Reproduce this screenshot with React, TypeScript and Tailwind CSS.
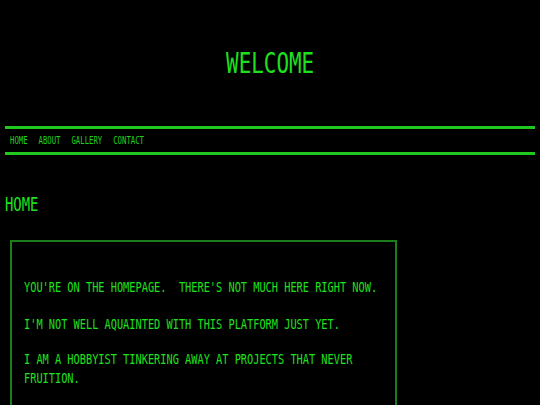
import React from 'react';

// the original uses a narrow pixel font; squeeze a mono face to the same proportions
const mono = { fontFamily: '"DejaVu Sans Mono", "Liberation Mono", monospace' };

const NAV = ['Home', 'About', 'Gallery', 'Contact'];

export default function App() {
  return (
    <div className="min-h-[405px] w-[540px] overflow-hidden bg-black uppercase text-[#1fe01f]" style={mono}>
      {/* title */}
      <header className="h-[126px] flex items-center justify-center">
        <h1 className="text-[29px] leading-none scale-x-[0.72]">Welcome</h1>
      </header>

      {/* nav bar */}
      <nav className="mx-[5px] h-[29px] border-y-[3px] border-[#20c820] flex items-center pl-[5px]">
        <div className="flex gap-[15px] origin-left scale-x-[0.73] whitespace-nowrap">
          {NAV.map((item) => (
            <a key={item} className="text-[10px] leading-none text-[#1fd01f]">
              {item}
            </a>
          ))}
        </div>
      </nav>

      {/* page content */}
      <main className="pt-[37px]">
        <h2 className="ml-[5px] text-[19px] leading-[24px] origin-left scale-x-[0.73]">Home</h2>
        <div className="ml-[10px] mt-[24px] w-[387px] border-2 border-[#1b7d1b] pl-[12px] pt-[36px] pb-6">
          <div className="w-[500px] origin-left scale-x-[0.735] text-[14px] leading-[19px] whitespace-pre-wrap">
            <p className="mb-[18px]">You're on the homepage.  There's not much here right now.</p>
            <p className="mb-[16px]">I'm not well aquainted with this platform just yet.</p>
            <p>I am a hobbyist tinkering away at projects that never fruition.</p>
          </div>
        </div>
      </main>
    </div>
  );
}
